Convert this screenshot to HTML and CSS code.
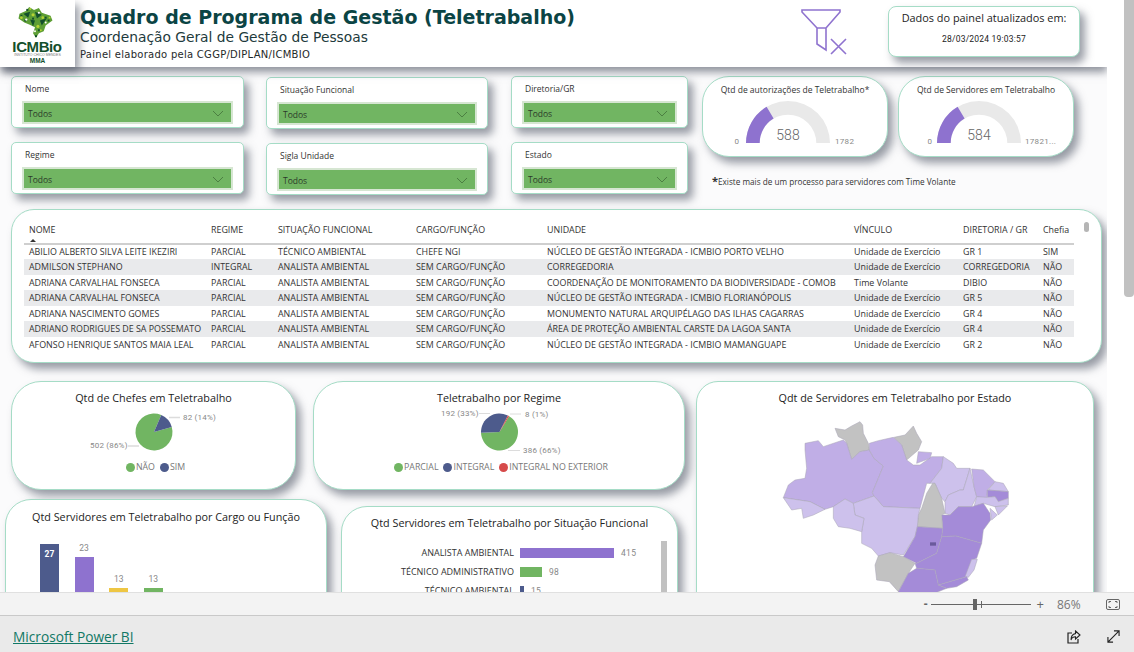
FILE: index.html
```html
<!DOCTYPE html>
<html lang="pt-BR">
<head>
    <meta charset="UTF-8">
    <title>Quadro de Programa de Gestão (Teletrabalho)</title>
    <link rel="stylesheet" href="styles.css">
</head>
<body>
    <div class="report">
        <div class="canvas">
            <header class="top-header">
                <div class="logo">
                    <svg class="logo-map" width="40" height="33" viewBox="0 0 40 34">
                        <path d="M4 8 L11 5 L14 1 L19 4 L24 2 L27 7 L36 10 L38 15 L31 20 L29 26 L24 28 L21 33 L18 28 L20 22 L14 19 L9 17 L3 13 Z" fill="#5d9e35"/>
                        <path d="M8 8 L15 6 L13 12 Z M20 6 L27 9 L22 13 Z M25 15 L32 13 L27 20 Z M15 14 L20 15 L18 21 Z" fill="#14502c"/>
                        <g fill="#14502c">
                            <rect x="5" y="9" width="2" height="2"/><rect x="11" y="3" width="2" height="2"/>
                            <rect x="17" y="12" width="2" height="2"/><rect x="30" y="11" width="2" height="2"/>
                            <rect x="33" y="14" width="2" height="2"/><rect x="23" y="24" width="2" height="2"/>
                            <rect x="20" y="30" width="2" height="2"/><rect x="9" y="14" width="2" height="2"/>
                        </g>
                        <g fill="#b5d334">
                            <circle cx="6" cy="12" r="1.4"/><circle cx="18" cy="9" r="1.6"/>
                            <circle cx="28" cy="12" r="1.4"/><circle cx="23" cy="21" r="1.6"/>
                            <circle cx="35" cy="12" r="1"/><circle cx="15" cy="3" r="1"/>
                            <circle cx="26" cy="25" r="1"/>
                        </g>
                        <circle cx="11" cy="14" r="1.2" fill="#fff"/>
                        <circle cx="24" cy="7" r="1.1" fill="#fff"/>
                        <circle cx="31" cy="17" r="1" fill="#fff"/>
                        <circle cx="20" cy="26" r="1" fill="#fff"/>
                    </svg>
                    <div class="logo-name">ICMBio</div>
                    <div class="logo-sub">INSTITUTO CHICO MENDES</div>
                    <div class="logo-mma">MMA</div>
                </div>
                <div class="titles">
                    <h1>Quadro de Programa de Gestão (Teletrabalho)</h1>
                    <div class="subtitle">Coordenação Geral de Gestão de Pessoas</div>
                    <div class="credit">Painel elaborado pela CGGP/DIPLAN/ICMBIO</div>
                </div>
                <svg class="filter-icon" width="50" height="50" viewBox="0 0 50 50">
                    <path d="M2 3 H40 V5 L26 21 H17 L2 5 Z M17 21 V37 L26 43 V21" fill="none" stroke="#8f73cf" stroke-width="1.6"/>
                    <path d="M31 32 L46 47 M46 32 L31 47" fill="none" stroke="#8f73cf" stroke-width="1.6"/>
                </svg>
                <div class="card date-card">
                    <div class="date-label">Dados do painel atualizados em:</div>
                    <div class="date-value">28/03/2024 19:03:57</div>
                </div>
            </header>

            <section class="controls">
                <div class="slicer-col col-a">
                    <div class="card slicer"><span class="slicer-label">Nome</span><div class="dropdown">Todos<svg width="12" height="7" viewBox="0 0 12 7"><path d="M1 1 L6 6 L11 1" fill="none" stroke="#4c7f42"/></svg></div></div>
                    <div class="card slicer"><span class="slicer-label">Regime</span><div class="dropdown">Todos<svg width="12" height="7" viewBox="0 0 12 7"><path d="M1 1 L6 6 L11 1" fill="none" stroke="#4c7f42"/></svg></div></div>
                </div>
                <div class="slicer-col col-b">
                    <div class="card slicer"><span class="slicer-label">Situação Funcional</span><div class="dropdown">Todos<svg width="12" height="7" viewBox="0 0 12 7"><path d="M1 1 L6 6 L11 1" fill="none" stroke="#4c7f42"/></svg></div></div>
                    <div class="card slicer"><span class="slicer-label">Sigla Unidade</span><div class="dropdown">Todos<svg width="12" height="7" viewBox="0 0 12 7"><path d="M1 1 L6 6 L11 1" fill="none" stroke="#4c7f42"/></svg></div></div>
                </div>
                <div class="slicer-col col-c">
                    <div class="card slicer"><span class="slicer-label">Diretoria/GR</span><div class="dropdown">Todos<svg width="12" height="7" viewBox="0 0 12 7"><path d="M1 1 L6 6 L11 1" fill="none" stroke="#4c7f42"/></svg></div></div>
                    <div class="card slicer"><span class="slicer-label">Estado</span><div class="dropdown">Todos<svg width="12" height="7" viewBox="0 0 12 7"><path d="M1 1 L6 6 L11 1" fill="none" stroke="#4c7f42"/></svg></div></div>
                </div>
                <div class="gauges">
                    <div class="gauge-row">
                        <div class="card gauge gauge-a">
                            <div class="gauge-title">Qtd de autorizações de Teletrabalho*</div>
                            <svg width="184" height="58" viewBox="0 0 184 58">
                                <path d="M43 47 A42 42 0 0 1 127 47 H113.3 A28.3 28.3 0 0 0 56.7 47 Z" fill="#e9e9e9"/>
                                <path d="M43 47 A42 42 0 0 1 63.6 10.8 L70.6 22.6 A28.3 28.3 0 0 0 56.7 47 Z" fill="#8e72cf"/>
                                <text class="gauge-end" x="34" y="48" text-anchor="middle">0</text>
                                <text class="gauge-value" x="85" y="44" text-anchor="middle">588</text>
                                <text class="gauge-end" x="132" y="48">1782</text>
                            </svg>
                        </div>
                        <div class="card gauge gauge-b">
                            <div class="gauge-title">Qtd de Servidores em Teletrabalho</div>
                            <svg width="174" height="58" viewBox="0 0 174 58">
                                <path d="M38 47 A42 42 0 0 1 122 47 H108.3 A28.3 28.3 0 0 0 51.7 47 Z" fill="#e9e9e9"/>
                                <path d="M38 47 A42 42 0 0 1 58.6 10.8 L65.6 22.6 A28.3 28.3 0 0 0 51.7 47 Z" fill="#8e72cf"/>
                                <text class="gauge-end" x="31" y="48" text-anchor="middle">0</text>
                                <text class="gauge-value" x="80" y="44" text-anchor="middle">584</text>
                                <text class="gauge-end" x="126" y="48">17821...</text>
                            </svg>
                        </div>
                    </div>
                    <div class="gauge-note"><b>*</b>Existe mais de um processo para servidores com Time Volante</div>
                </div>
            </section>

            <section class="card table-card">
                <table class="people">
                    <colgroup>
                        <col class="c-nome"><col class="c-regime"><col class="c-situacao"><col class="c-cargo"><col class="c-unidade"><col class="c-vinculo"><col class="c-dir"><col class="c-chefia">
                    </colgroup>
                    <thead>
                        <tr><th>NOME<span class="sort-mark"></span></th><th>REGIME</th><th>SITUAÇÃO FUNCIONAL</th><th>CARGO/FUNÇÃO</th><th>UNIDADE</th><th>VÍNCULO</th><th>DIRETORIA / GR</th><th>Chefia</th></tr>
                    </thead>
                    <tbody>
                        <tr><td>ABILIO ALBERTO SILVA LEITE IKEZIRI</td><td>PARCIAL</td><td>TÉCNICO AMBIENTAL</td><td>CHEFE NGI</td><td>NÚCLEO DE GESTÃO INTEGRADA - ICMBIO PORTO VELHO</td><td>Unidade de Exercício</td><td>GR 1</td><td>SIM</td></tr>
                        <tr><td>ADMILSON STEPHANO</td><td>INTEGRAL</td><td>ANALISTA AMBIENTAL</td><td>SEM CARGO/FUNÇÃO</td><td>CORREGEDORIA</td><td>Unidade de Exercício</td><td>CORREGEDORIA</td><td>NÃO</td></tr>
                        <tr><td>ADRIANA CARVALHAL FONSECA</td><td>PARCIAL</td><td>ANALISTA AMBIENTAL</td><td>SEM CARGO/FUNÇÃO</td><td>COORDENAÇÃO DE MONITORAMENTO DA BIODIVERSIDADE - COMOB</td><td>Time Volante</td><td>DIBIO</td><td>NÃO</td></tr>
                        <tr><td>ADRIANA CARVALHAL FONSECA</td><td>PARCIAL</td><td>ANALISTA AMBIENTAL</td><td>SEM CARGO/FUNÇÃO</td><td>NÚCLEO DE GESTÃO INTEGRADA - ICMBIO FLORIANÓPOLIS</td><td>Unidade de Exercício</td><td>GR 5</td><td>NÃO</td></tr>
                        <tr><td>ADRIANA NASCIMENTO GOMES</td><td>PARCIAL</td><td>ANALISTA AMBIENTAL</td><td>SEM CARGO/FUNÇÃO</td><td>MONUMENTO NATURAL ARQUIPÉLAGO DAS ILHAS CAGARRAS</td><td>Unidade de Exercício</td><td>GR 4</td><td>NÃO</td></tr>
                        <tr><td>ADRIANO RODRIGUES DE SA POSSEMATO</td><td>PARCIAL</td><td>ANALISTA AMBIENTAL</td><td>SEM CARGO/FUNÇÃO</td><td>ÁREA DE PROTEÇÃO AMBIENTAL CARSTE DA LAGOA SANTA</td><td>Unidade de Exercício</td><td>GR 4</td><td>NÃO</td></tr>
                        <tr><td>AFONSO HENRIQUE SANTOS MAIA LEAL</td><td>PARCIAL</td><td>ANALISTA AMBIENTAL</td><td>SEM CARGO/FUNÇÃO</td><td>NÚCLEO DE GESTÃO INTEGRADA - ICMBIO MAMANGUAPE</td><td>Unidade de Exercício</td><td>GR 2</td><td>NÃO</td></tr>
                    </tbody>
                </table>
                <div class="table-thumb"></div>
            </section>

            <section class="charts">
                <div class="charts-left">
                    <div class="chart-row-one">
                        <div class="card chart chefes">
                            <h2>Qtd de Chefes em Teletrabalho</h2>
                            <svg class="pie" width="285" height="55" viewBox="11 405 285 55">
                                <g transform="translate(154 432)">
                                    <path d="M0 0 L17.78 -5.1 A18.5 18.5 0 1 1 7.23 -17.03 Z" fill="#71b562"/>
                                    <path d="M0 0 L7.23 -17.03 A18.5 18.5 0 0 1 17.78 -5.1 Z" fill="#4d5b8c"/>
                                </g>
                                <path d="M169 417.5 H180 M128 446 H139" stroke="#dcdcdc" stroke-width="1.5"/>
                                <text class="pie-label" x="183" y="420">82 (14%)</text>
                                <text class="pie-label" x="90" y="448">502 (86%)</text>
                            </svg>
                            <div class="legend">
                                <span class="dot dot-green"></span><span>NÃO</span>
                                <span class="dot dot-navy"></span><span>SIM</span>
                            </div>
                        </div>
                        <div class="card chart regime">
                            <h2>Teletrabalho por Regime</h2>
                            <svg class="pie" width="372" height="55" viewBox="313 405 372 55">
                                <g transform="translate(499.5 432)">
                                    <path d="M0 0 L9.53 -15.86 A18.5 18.5 0 1 1 -18.49 0.65 Z" fill="#71b562"/>
                                    <path d="M0 0 L-18.49 0.65 A18.5 18.5 0 0 1 8.4 -16.48 Z" fill="#4d5b8c"/>
                                    <path d="M0 0 L8.4 -16.48 A18.5 18.5 0 0 1 9.53 -15.86 Z" fill="#d64a4a"/>
                                </g>
                                <path d="M479 413.5 H490 M510 414 H521 M508 450.5 H520" stroke="#dcdcdc"/>
                                <text class="pie-label" x="441" y="416">192 (33%)</text>
                                <text class="pie-label" x="525" y="417">8 (1%)</text>
                                <text class="pie-label" x="523" y="453">386 (66%)</text>
                            </svg>
                            <div class="legend">
                                <span class="dot dot-green"></span><span>PARCIAL</span>
                                <span class="dot dot-navy"></span><span>INTEGRAL</span>
                                <span class="dot dot-red"></span><span>INTEGRAL NO EXTERIOR</span>
                            </div>
                        </div>
                    </div>
                    <div class="chart-row-two">
                        <div class="card chart cargo">
                            <h2>Qtd Servidores em Teletrabalho por Cargo ou Função</h2>
                            <div class="columns">
                                <div class="column"><div class="col-bar bar-navy bar-27"><span class="inner-value">27</span></div></div>
                                <div class="column"><span class="col-value">23</span><div class="col-bar bar-purple bar-23"></div></div>
                                <div class="column"><span class="col-value">13</span><div class="col-bar bar-yellow bar-13"></div></div>
                                <div class="column"><span class="col-value">13</span><div class="col-bar bar-green bar-13"></div></div>
                            </div>
                        </div>
                        <div class="card chart situacao">
                            <h2>Qtd Servidores em Teletrabalho por Situação Funcional</h2>
                            <div class="hbars">
                                <span class="hbar-label">ANALISTA AMBIENTAL</span>
                                <div class="hbar-track"><div class="hbar bar-purple" style="width: 94px"></div><span class="hbar-value">415</span></div>
                                <span class="hbar-label">TÉCNICO ADMINISTRATIVO</span>
                                <div class="hbar-track"><div class="hbar bar-green" style="width: 22px"></div><span class="hbar-value">98</span></div>
                                <span class="hbar-label">TÉCNICO AMBIENTAL</span>
                                <div class="hbar-track"><div class="hbar bar-navy" style="width: 4px"></div><span class="hbar-value">15</span></div>
                            </div>
                            <div class="hbars-scroll"></div>
                        </div>
                    </div>
                </div>
                <div class="card chart mapa">
                    <h2>Qdt de Servidores em Teletrabalho por Estado</h2>
                    <svg class="brasil" width="300" height="195" viewBox="0 0 900 585">
                        <g stroke="#aaa6b8" stroke-width="1.6" stroke-linejoin="round">
                            <path class="st-grey" d="M255 85 285 90 305 78 330 65 338 75 340 100 355 130 358 150 330 155 305 178 290 130 285 120 265 110Z"/>
                            <path class="st-grey" d="M432 112 465 105 490 78 500 100 515 125 505 150 470 180 455 135Z"/>
                            <path class="st-mid" d="M165 130 205 122 220 140 280 120 290 130 305 178 330 155 358 150 372 175 400 198 385 235 367 278 372 288 310 310 285 297 250 320 225 328 180 305 100 293 115 255 135 240 165 235 170 205 165 150Z"/>
                            <path class="st-mid" d="M358 130 385 122 430 112 455 135 470 180 490 195 510 195 545 170 580 170 575 205 540 250 530 250 510 325 400 320 372 288 367 278 385 235 400 198 372 175 358 150Z"/>
                            <path class="st-mid" d="M505 155 545 158 540 175 500 190Z"/>
                            <path class="st-light" d="M580 170 610 190 620 205 660 205 640 270 630 270 595 285 585 305 575 295 555 250 540 250 575 205Z"/>
                            <path class="st-light" d="M660 205 672 260 680 290 665 320 625 320 600 345 585 340 585 305 595 285 630 270 640 270Z"/>
                            <path class="st-mid" d="M665 207 700 210 735 245 712 270 710 295 680 290 672 260Z"/>
                            <path class="st-light" d="M735 245 760 250 775 275 715 270Z"/>
                            <path class="st-strong" d="M712 270 775 275 775 295 745 305 735 290 712 292Z"/>
                            <path class="st-light" d="M680 290 712 292 735 290 745 305 775 295 775 315 735 320 700 310 672 320Z"/>
                            <path class="st-light" d="M735 320 772 318 745 345Z"/>
                            <path class="st-light" d="M720 325 742 345 725 360Z"/>
                            <path class="st-strong" d="M665 320 700 310 720 340 722 360 700 390 695 430 618 408 575 410 578 385 575 345 600 345 625 320Z"/>
                            <path class="st-grey" d="M548 250 555 250 575 295 585 340 575 345 578 385 502 380 505 345 515 325 530 280Z"/>
                            <path class="st-light" d="M310 310 372 288 400 320 510 325 505 345 502 380 495 410 460 465 420 458 385 468 365 445 335 430 335 395 342 355 315 345Z"/>
                            <path class="st-light" d="M250 320 285 297 310 310 315 345 342 355 335 395 300 385 265 380 250 355Z"/>
                            <path class="st-light" d="M100 293 180 305 225 328 190 345 160 355 155 325 125 330Z"/>
                            <path class="st-strong" d="M502 380 578 385 575 410 560 460 500 490 460 470 495 410Z"/>
                            <path class="st-grey" d="M385 468 420 458 460 470 495 490 475 520 445 575 418 545 380 540 375 495Z"/>
                            <path class="st-strong" d="M575 410 618 408 695 430 680 475 665 480 650 530 565 555 555 510 500 505 495 490 500 490 560 460Z"/>
                            <path class="st-light" d="M665 478 682 478 672 510 655 532 645 530Z"/>
                            <path class="st-strong" d="M475 520 500 505 555 510 565 555 590 565 540 585 440 585Z"/>
                            <path class="st-strong" d="M565 555 650 530 655 540 620 560 590 565Z"/>
                        </g>
                        <rect x="540" y="427" width="18" height="10" fill="#6a5a9c"/>
                    </svg>
                </div>
            </section>
        </div>
        <div class="page-scroll"></div>
    </div>

    <div class="zoom-bar">
        <span class="zoom-minus">-</span>
        <div class="zoom-slider"><span class="zoom-thumb"></span><span class="zoom-tick"></span></div>
        <span class="zoom-plus">+</span>
        <span class="zoom-pct">86%</span>
        <svg class="fit-icon" width="14" height="11" viewBox="0 0 14 11">
            <rect x="0.5" y="0.5" width="13" height="10" rx="1.5" fill="none" stroke="#666"/>
            <path d="M3 4 V2.5 H5 M9 2.5 H11 V4 M11 7 V8.5 H9 M5 8.5 H3 V7" fill="none" stroke="#666"/>
        </svg>
    </div>
    <footer class="footer">
        <a class="brand" href="#">Microsoft Power BI</a>
        <svg class="share-icon" width="14" height="14" viewBox="0 0 14 14">
            <path d="M5 3 H1 V13 H11 V9" fill="none" stroke="#222" stroke-width="1.2"/>
            <path d="M8.5 1 L13 5 L8.5 9 V6.8 C6 6.8 4.6 8 4 10 C4 6.5 6 4 8.5 3.6 Z" fill="none" stroke="#222" stroke-width="1.1"/>
        </svg>
        <svg class="expand-icon" width="13" height="13" viewBox="0 0 14 14">
            <path d="M1 13 L13 1 M7.5 1 H13 V6.5 M1 7.5 V13 H6.5" fill="none" stroke="#222" stroke-width="1.2"/>
        </svg>
    </footer>
</body>
</html>
```

FILE: styles.css
```css
* {
    box-sizing: border-box;
}
html, body {
    margin: 0;
    height: 100%;
}
body {
    width: 1134px;
    height: 652px;
    overflow: hidden;
    display: flex;
    flex-direction: column;
    font-family: "Open Sans", "Liberation Sans", sans-serif;
    color: #333;
    background: #fff;
}

/* report area */
.report {
    position: relative;
    height: 592px;
    overflow: hidden;
    background: #fff;
}
.canvas {
    width: 1107px;
    height: 592px;
    overflow: hidden;
    background: #fbfbfc;
}
.page-scroll {
    position: absolute;
    top: 0;
    right: 0;
    width: 10px;
    height: 297px;
    background: #c1c1c1;
    border-radius: 0 0 4px 4px;
}
.card {
    background: #fff;
    border: 1px solid #a5dcc6;
    box-shadow: 5px 6px 9px rgba(70, 76, 92, 0.55);
}

/* header */
.top-header {
    display: flex;
    align-items: flex-start;
    height: 67px;
    background: #fff;
    box-shadow: 0 5px 8px rgba(70, 76, 92, 0.6);
    position: relative;
}
.logo {
    position: relative;
    width: 75px;
    height: 67px;
    display: flex;
    flex-direction: column;
    align-items: center;
    padding-top: 6px;
    box-shadow: 4px 5px 8px rgba(70, 76, 92, 0.55);
    background: #fff;
    color: #14502c;
    line-height: 1;
    font-family: "Liberation Sans", sans-serif;
}
.logo-map {
    margin-left: -5px;
}
.logo-name {
    font-size: 15px;
    font-weight: bold;
    margin-left: -1px;
    letter-spacing: -0.4px;
}
.logo-sub {
    font-size: 3.5px;
    white-space: nowrap;
    color: #777;
}
.logo-mma {
    font-size: 6.5px;
    font-weight: bold;
}
.titles {
    margin-left: 5px;
    width: 716px;
    font-family: "DejaVu Sans", sans-serif;
    color: #1f2a2a;
}
.titles h1 {
    margin: 5px 0 0;
    font-size: 19px;
    line-height: 24px;
    color: #0b4444;
}
.subtitle {
    font-size: 13.8px;
    line-height: 17px;
    color: #1d3a3c;
}
.credit {
    font-size: 10px;
    line-height: 14px;
    margin-top: 2px;
    letter-spacing: 0.27px;
}
.filter-icon {
    margin: 7px 0 0 4px;
}
.date-card {
    width: 192px;
    height: 51px;
    margin: 6px 0 0 38px;
    border-radius: 8px;
    text-align: center;
    color: #222;
}
.date-label {
    font-size: 10.9px;
    line-height: 14px;
    margin-top: 4px;
}
.date-value {
    font-family: Roboto, sans-serif;
    font-size: 8.5px;
    margin-top: 9px;
    letter-spacing: 0.2px;
}

/* slicers and gauges */
.controls {
    display: flex;
    padding: 9px 0 0 11px;
    height: 142px;
}
.slicer-col {
    display: flex;
    flex-direction: column;
    gap: 14px;
}
.col-a {
    width: 233px;
}
.col-b {
    width: 222px;
    margin: 1px 0 0 22px;
}
.col-c {
    width: 177px;
    margin-left: 23px;
}
.slicer {
    height: 52px;
    border-radius: 5px;
    padding: 6px 10px 0;
}
.slicer-label {
    display: block;
    font-size: 8.5px;
    line-height: 12px;
    padding-left: 3px;
}
.dropdown {
    display: flex;
    align-items: center;
    justify-content: space-between;
    height: 23px;
    margin-top: 6px;
    padding: 2px 7px 0 4px;
    background: #71b562;
    border: 2px solid #d6e6d2;
    font-size: 8.5px;
    color: #2c3a2a;
}
.gauges {
    margin-left: 14px;
}
.gauge-row {
    display: flex;
    gap: 10px;
}
.gauge {
    height: 81px;
    border-radius: 27px;
    padding-top: 6px;
}
.gauge-a {
    width: 186px;
}
.gauge-b {
    width: 176px;
}
.gauge svg {
    display: block;
}
.gauge-title {
    font-size: 8.5px;
    line-height: 13px;
    text-align: center;
}
.gauge-end {
    font-family: Roboto, sans-serif;
    font-size: 8px;
    fill: #888;
    letter-spacing: 0.3px;
}
.gauge-value {
    font-family: Roboto, sans-serif;
    font-size: 14px;
    font-weight: 300;
    fill: #666;
}
.gauge-note {
    font-size: 8.2px;
    line-height: 12px;
    margin: 18px 0 0 10px;
}
.gauge-note b {
    font-size: 11px;
}

/* table */
.table-card {
    position: relative;
    width: 1091px;
    height: 154px;
    margin: 0 0 18px 11px;
    border-radius: 23px;
    padding: 7px 0 0 12px;
}
.people {
    width: 1050px;
    table-layout: fixed;
    border-collapse: collapse;
    font-size: 8.9px;
    color: #333;
}
.c-nome { width: 182px; }
.c-regime { width: 67px; }
.c-situacao { width: 138px; }
.c-cargo { width: 131px; }
.c-unidade { width: 307px; }
.c-vinculo { width: 109px; }
.c-dir { width: 80px; }
.c-chefia { width: 36px; }
.people th {
    position: relative;
    height: 27px;
    padding: 0 0 2px 5px;
    text-align: left;
    font-weight: normal;
    border-bottom: 2px solid #cfcfcf;
}
.people td {
    height: 15px;
    line-height: 12px;
    padding: 0 0 0 5px;
    white-space: nowrap;
    overflow: hidden;
}
.people tbody tr:nth-child(even) td {
    height: 16px;
    background: #e9eaec;
}
.sort-mark {
    position: absolute;
    left: 6px;
    bottom: 1px;
    border-left: 3px solid transparent;
    border-right: 3px solid transparent;
    border-bottom: 3px solid #333;
}
.table-thumb {
    position: absolute;
    left: 1072px;
    top: 12px;
    width: 5px;
    height: 10px;
    border-radius: 3px;
    background: #b5b5b5;
}

/* charts */
.charts {
    display: flex;
    align-items: flex-start;
}
.charts-left {
    width: 696px;
}
.chart h2 {
    margin: 0;
    font-size: 10.8px;
    line-height: 15px;
    font-weight: normal;
    color: #222;
    text-align: center;
}
.chart-row-one {
    display: flex;
    gap: 17px;
    margin-left: 11px;
}
.chart-row-one .chart {
    height: 109px;
    border-radius: 30px;
    padding-top: 8px;
}
.chefes {
    width: 285px;
}
.regime {
    width: 372px;
}
.pie {
    display: block;
    margin-left: -1px;
}
.pie-label {
    font-family: Roboto, sans-serif;
    font-size: 8px;
    fill: #888;
    letter-spacing: 0.2px;
}
.legend {
    display: flex;
    justify-content: center;
    align-items: center;
    gap: 1px;
    font-size: 8.8px;
    color: #777;
    margin-top: 1px;
}
.dot {
    width: 9px;
    height: 9px;
    border-radius: 50%;
    margin-left: 4px;
}
.dot-green { background: #71b562; }
.dot-navy { background: #4d5b8c; }
.dot-red { background: #d64a4a; }

.chart-row-two {
    display: flex;
    align-items: flex-start;
    margin: 9px 0 0 5px;
    gap: 14px;
}
.cargo {
    width: 322px;
    height: 150px;
    border-radius: 26px;
    padding-top: 9px;
}
.situacao {
    position: relative;
    width: 337px;
    height: 150px;
    margin-top: 7px;
    border-radius: 26px;
    padding-top: 8px;
}
.columns {
    display: flex;
    align-items: flex-start;
    gap: 15.6px;
    height: 100px;
    margin: 19px 0 0 34px;
}
.column {
    width: 19px;
    height: 100px;
    display: flex;
    flex-direction: column;
    justify-content: flex-end;
    align-items: center;
}
.col-value {
    font-family: Roboto, sans-serif;
    font-size: 8.5px;
    color: #888;
    margin-bottom: 4px;
}
.col-bar {
    width: 19px;
}
.inner-value {
    display: block;
    padding-top: 5px;
    text-align: center;
    font-family: Roboto, sans-serif;
    font-size: 8.5px;
    font-weight: bold;
    color: #fff;
}
.bar-27 { height: 99px; }
.bar-23 { height: 87px; }
.bar-13 { height: 55px; }
.bar-navy { background: #4d5b8c; }
.bar-purple { background: #8e72cf; }
.bar-yellow { background: #eec643; }
.bar-green { background: #71b562; }

.hbars {
    display: grid;
    grid-template-columns: 172px 1fr;
    grid-auto-rows: 19px;
    column-gap: 6px;
    align-items: center;
    margin-top: 13px;
}
.hbar-label {
    font-size: 9px;
    text-align: right;
    color: #333;
}
.hbar-track {
    display: flex;
    align-items: center;
    gap: 7px;
}
.hbar {
    height: 10px;
}
.hbar-value {
    font-family: Roboto, sans-serif;
    font-size: 8.5px;
    color: #888;
    letter-spacing: 0.3px;
}
.hbars-scroll {
    position: absolute;
    left: 319px;
    top: 34px;
    width: 6px;
    height: 100px;
    background: #c1c1c1;
}
.mapa {
    width: 398px;
    height: 240px;
    border-radius: 22px;
    padding-top: 8px;
}
.brasil {
    display: block;
    margin: -5px 0 0 53px;
}
.st-grey { fill: #c2c2c2; }
.st-mid { fill: #c0aee6; }
.st-light { fill: #cdc1ec; }
.st-strong { fill: #a48bd8; }

/* zoom bar and footer */
.zoom-bar {
    position: relative;
    height: 23px;
    background: #f3f3f3;
    border-top: 1px solid #e0e0e0;
    display: flex;
    align-items: center;
    justify-content: flex-end;
    padding-right: 14px;
    color: #666;
    font-size: 12px;
}
.zoom-minus {
    margin-right: 3px;
    font-weight: bold;
    line-height: 1;
}
.zoom-slider {
    position: relative;
    width: 100px;
    height: 1px;
    background: #666;
}
.zoom-thumb {
    position: absolute;
    left: 42px;
    top: -5px;
    width: 4px;
    height: 11px;
    background: #666;
}
.zoom-tick {
    position: absolute;
    left: 50px;
    top: -3px;
    width: 1px;
    height: 7px;
    background: #666;
}
.zoom-plus {
    margin-left: 6px;
    font-size: 13px;
}
.zoom-pct {
    margin-left: 13px;
    width: 26px;
    color: #777;
}
.fit-icon {
    margin-left: 23px;
}
.footer {
    flex: 1;
    display: flex;
    align-items: center;
    background: #eaeaea;
    border-top: 1px solid #c9c9c9;
    padding: 5px 14px 0 13px;
}
.brand {
    font-size: 13.7px;
    color: #117865;
    margin-right: auto;
}
.share-icon {
    margin-right: 26px;
}
```
